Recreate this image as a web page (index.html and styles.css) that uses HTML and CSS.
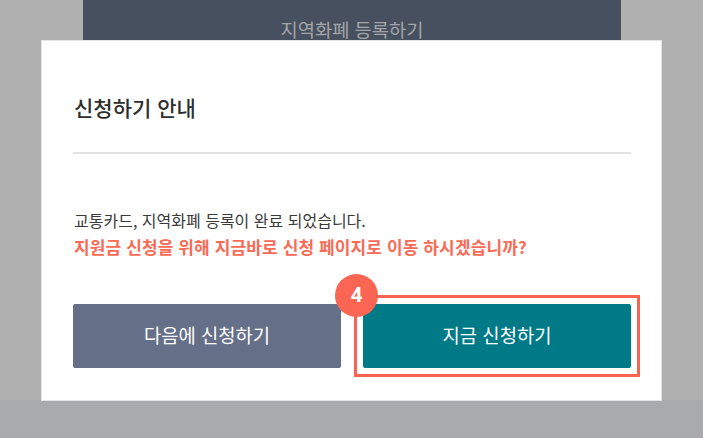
FILE: index.html
```html
<!DOCTYPE html>
<html lang="ko">
<head>
  <meta charset="utf-8">
  <title>신청하기 안내</title>
  <link rel="stylesheet" href="styles.css">
</head>
<body>
  <div class="page">
    <div class="backdrop">
      <div class="register-bar">지역화폐 등록하기</div>
      <div class="bottom-band"></div>
    </div>

    <div class="modal">
      <h2 class="modal-title">신청하기 안내</h2>
      <div class="modal-body">
        <p class="message">교통카드, 지역화폐 등록이 완료 되었습니다.</p>
        <p class="message-strong">지원금 신청을 위해 지금바로 신청 페이지로 이동 하시겠습니까?</p>
      </div>
      <div class="modal-actions">
        <button class="btn btn-later">다음에 신청하기</button>
        <button class="btn btn-now">지금 신청하기</button>
      </div>
      <div class="highlight"></div>
      <div class="step-badge">4</div>
    </div>
  </div>
</body>
</html>
```

FILE: styles.css
```css
* {
  box-sizing: border-box;
}

html, body {
  height: 100%;
}

body {
  margin: 0;
  overflow: hidden;
  background-color: #b0b0b0;
  font-family: "Noto Sans CJK KR", "Noto Sans", sans-serif;
}

.page {
  position: relative;
  height: 438px;
}

/* Page behind the dialog */
.backdrop {
  height: 100%;
  display: flex;
  flex-direction: column;
  justify-content: space-between;
}

.register-bar {
  width: 538px;
  height: 40px;
  margin-left: 83px;
  padding-top: 17px;
  background-color: #47505f;
  color: #a3a5a8;
  font-size: 18.7px;
  line-height: 23px;
  text-align: center;
}

.bottom-band {
  height: 38px;
  background-color: #a9aaae;
}

/* Dialog */
.modal {
  position: absolute;
  left: 41px;
  top: 40px;
  width: 621px;
  height: 361px;
  padding: 0 31px;
  border: 1px solid #e4e4e4;
  background-color: #fff;
}

.modal-title {
  margin: 0;
  height: 113px;
  margin-right: -1px;
  padding: 51px 0 0 1px;
  border-bottom: 2px solid #e2e2e2;
  color: #2e2e2e;
  font-size: 21px;
  font-weight: 500;
  line-height: 30px;
}

.modal-body {
  padding-top: 53px;
}

.message {
  margin: 0;
  padding-left: 1px;
  color: #3a3a3a;
  font-size: 16px;
  line-height: 26px;
}

.message-strong {
  margin: 1px 0 0;
  padding-left: 1px;
  color: #fa6a55;
  font-size: 17px;
  font-weight: 700;
  line-height: 26px;
  letter-spacing: 0.12px;
}

.modal-actions {
  display: flex;
  gap: 22px;
  margin-top: 44px;
  margin-right: -1px;
}

.btn {
  width: 268px;
  height: 64px;
  padding: 0 0 3px;
  border: none;
  border-radius: 2px;
  color: #fff;
  font-family: inherit;
  font-size: 18.8px;
  cursor: pointer;
}

.btn-later {
  background-color: #657088;
}

.btn-now {
  background-color: #007a87;
}

/* Tutorial markers on top of the dialog */
.highlight {
  position: absolute;
  left: 312px;
  top: 254px;
  width: 286px;
  height: 82px;
  border: 3px solid #f96353;
}

.step-badge {
  position: absolute;
  left: 293px;
  top: 233px;
  width: 43px;
  height: 43px;
  border-radius: 50%;
  background-color: #fb6554;
  color: #fff;
  font-family: "Roboto", sans-serif;
  font-size: 21px;
  font-weight: 700;
  line-height: 43px;
  text-align: center;
}
```
